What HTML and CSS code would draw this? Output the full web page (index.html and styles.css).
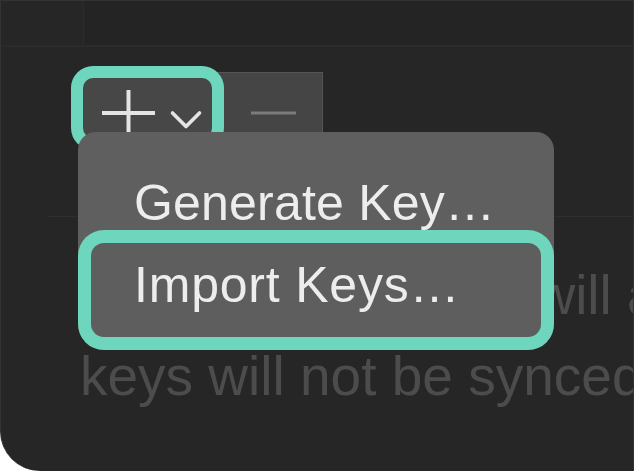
FILE: index.html
```html
<!DOCTYPE html>
<html lang="en">
<head>
<meta charset="utf-8">
<title>SSH Keys</title>
<link rel="stylesheet" href="styles.css">
</head>
<body>
<div class="window">
  <div class="toolbar"><div class="toolbar-field"></div></div>
  <div class="toolbar-rule"></div>
  <div class="controls">
    <div class="btn-add">
      <svg class="icon" width="129" height="60" viewBox="0 0 129 60" aria-hidden="true">
        <path d="M19 35H72M45.5 12V60" stroke="#e4e4e4" stroke-width="4" fill="none"/>
        <path d="M89.5 35L103 48.5L116.5 35" stroke="#e4e4e4" stroke-width="3.6" fill="none" stroke-linecap="round" stroke-linejoin="round"/>
      </svg>
    </div>
    <div class="btn-remove">
      <svg class="icon" width="109" height="68" viewBox="0 0 109 68" aria-hidden="true">
        <path d="M38 40H83" stroke="#7c7c7c" stroke-width="3" fill="none"/>
      </svg>
    </div>
  </div>
  <div class="list-rule"></div>
  <p class="empty"><span class="line">Current SSH keys will also</span><span class="line">keys will not be synced</span></p>
  <div class="menu">
    <div class="menu-item">Generate Key…</div>
    <div class="menu-item selected">Import Keys…</div>
  </div>
</div>
</body>
</html>
```
FILE: styles.css
```css
html, body {
  margin: 0;
  padding: 0;
  background: #ffffff;
}
body {
  font-family: "Liberation Sans", Arial, sans-serif;
}
.window {
  position: relative;
  width: 634px;
  height: 471px;
  box-sizing: border-box;
  background: #262626;
  border-top: 1px solid #333333;
  border-left: 1px solid #333333;
  border-right: 1px solid #333333;
  border-bottom-left-radius: 40px;
  overflow: hidden;
}
.toolbar {
  display: flex;
  height: 44px;
}
.toolbar-field {
  flex: 1;
  margin-left: 82px;
  background: #242424;
  border-left: 1px solid #2c2c2c;
}
.toolbar-rule {
  height: 2px;
  background: #2b2b2b;
}
.controls {
  display: flex;
  align-items: flex-start;
  padding-left: 82px;
  margin-top: 25px;
}
.btn-add {
  position: relative;
  z-index: 1;
  width: 129px;
  height: 60px;
  margin-top: 6px;
  background: #474747;
  border-radius: 10px;
  box-shadow: 0 0 0 12px #6dd6bd;
}
.icon {
  display: block;
}
.btn-remove {
  width: 109px;
  height: 68px;
  background: #454545;
  border: 1px solid #555555;
}
.list-rule {
  height: 1px;
  margin-top: 74px;
  margin-left: 47px;
  background: #2f2f2f;
}
.empty {
  margin: 38px 0 0 0;
  padding-left: 79px;
  font-size: 55px;
  line-height: 81px;
  color: #4c4c4c;
  white-space: nowrap;
}
.line {
  display: block;
}
.menu {
  position: absolute;
  z-index: 2;
  left: 77px;
  top: 131px;
  width: 476px;
  box-sizing: border-box;
  padding: 13px;
  background: #5f5f5f;
  border-radius: 18px 18px 26px 26px;
}
.menu-item {
  font-size: 50px;
  line-height: 60px;
  color: #ededed;
  padding: 28px 0 10px 43px;
  letter-spacing: 0.2px;
}
.menu-item.selected {
  padding: 12px 0 22px 43px;
  letter-spacing: 0.8px;
  background: #5e5e5e;
  border-radius: 13px;
  box-shadow: 0 0 0 13px #6dd6bd;
}
```
